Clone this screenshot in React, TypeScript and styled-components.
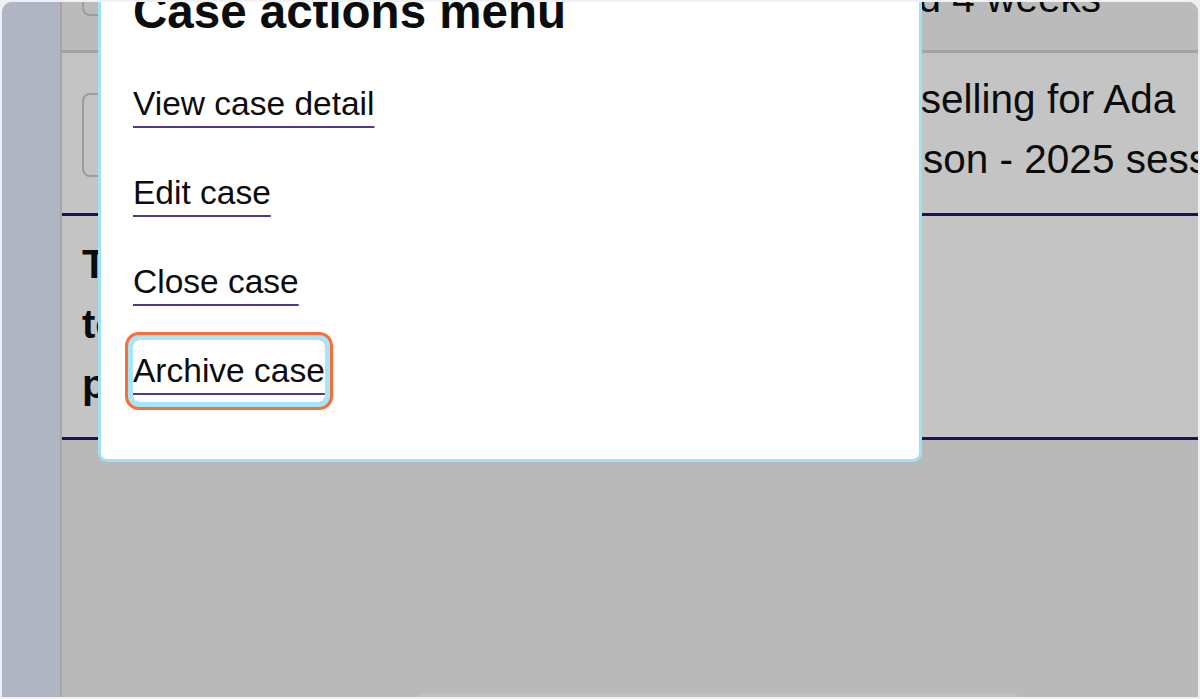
import React from 'react';
import styled, { createGlobalStyle } from 'styled-components';

const GlobalStyle = createGlobalStyle`
  html, body {
    margin: 0;
    padding: 0;
    background: #f1f1f5;
  }
  body {
    font-family: "Liberation Sans", Arial, sans-serif;
    color: #0b0c0c;
  }
  * {
    box-sizing: border-box;
  }
`;

const Frame = styled.div`
  width: 1200px;
  height: 699px;
  padding: 2px;
`;

const Window = styled.div`
  position: relative;
  display: flex;
  height: 100%;
  border-radius: 10px 10px 0 0;
  overflow: hidden;
  background: #b9b9b9;
`;

const Sidebar = styled.aside`
  width: 58px;
  flex: none;
  background: #b0b5c3;
`;

const Main = styled.main`
  flex: 1;
  min-width: 0;
  display: flex;
  flex-direction: column;
  border-left: 2px solid #a6a6a6;
  background: #b9b9b9;
  overflow: hidden;
`;

/* list is scrolled so the previous row only shows its bottom part */
const Table = styled.div`
  margin-top: -110px;
`;

const Row = styled.div<{ $selected?: boolean; $top: number; $bottom: number }>`
  display: grid;
  grid-template-columns: 100px 642px 1fr;
  padding: ${p => p.$top}px 0 ${p => p.$bottom}px 20px;
  background: ${p => (p.$selected ? '#c4c4c4' : '#bbbbbb')};
  border-bottom: 3px solid ${p => (p.$selected ? '#1c1152' : '#a3a3a3')};
`;

const Box = styled.div`
  width: 62px;
  height: 84px;
  margin-top: 24px;
  border: 2px solid #9c9c9c;
  border-radius: 8px;
`;

const Cell = styled.div`
  font-size: 40.5px;
  line-height: 60px;
  white-space: nowrap;
`;

const Detail = styled.div<{ $top: number; $bottom: number }>`
  padding: ${p => p.$top}px 0 ${p => p.$bottom}px 20px;
  background: #c4c4c4;
  border-bottom: 3px solid #1c1152;
  font-size: 40px;
  font-weight: 700;
  line-height: 60px;
  white-space: nowrap;
`;

const Peek = styled.div`
  margin-top: auto;
  margin-left: 343px;
  margin-bottom: -36px;
  width: 625px;
  height: 40px;
  flex: none;
  background: #c1c1c1;
  border-radius: 22px 22px 0 0;
`;

const Modal = styled.div`
  position: absolute;
  top: -42px;
  left: 96px;
  width: 824px;
  padding: 21px 32px 57px;
  background: #ffffff;
  border: 3px solid #9fe1f7;
  border-radius: 0 0 9px 9px;
`;

const Title = styled.h2`
  margin: 0;
  font-size: 47.5px;
  font-weight: 700;
  line-height: 56px;
`;

const Menu = styled.ul`
  margin: 33px 0 0;
  padding: 0;
  list-style: none;
  display: flex;
  flex-direction: column;
  gap: 27px;
`;

const MenuLink = styled.a<{ $focused?: boolean }>`
  display: block;
  width: fit-content;
  padding: 11px 0 11px;
  font-size: 33.5px;
  line-height: 40px;
  color: #0b0c0c;
  text-decoration: underline;
  text-decoration-color: #54378a;
  text-decoration-thickness: 1.5px;
  text-underline-offset: 11px;
  border-radius: 6px;
  box-shadow: ${p => (p.$focused ? '0 0 0 5px #a6e5fa, 0 0 0 8px #fb6d3a' : 'none')};
`;

const actions = ['View case detail', 'Edit case', 'Close case', 'Archive case'];

export default function App() {
  return (
    <>
      <GlobalStyle />
      <Frame>
        <Window>
          <Sidebar />
          <Main>
            <Table>
              <Row $top={16} $bottom={22}>
                <Box />
                <Cell>CAS-1187</Cell>
                <Cell>
                  Last reviewed
                  <br />
                  Added 4 weeks
                </Cell>
              </Row>
              <Row $selected $top={16} $bottom={24}>
                <Box />
                <Cell>CAS-1192</Cell>
                <Cell>
                  Counselling for Ada
                  <br />
                  Jameson - 2025 session
                </Cell>
              </Row>
              <Detail $top={18} $bottom={23}>
                Take action on this case
                <br />
                to keep it open, or it will be
                <br />
                permanently archived.
              </Detail>
            </Table>
            <Peek />
          </Main>
          <Modal role="dialog" aria-label="Case actions menu">
            <Title>Case actions menu</Title>
            <Menu>
              {actions.map(label => (
                <li key={label}>
                  <MenuLink href="#" $focused={label === 'Archive case'}>
                    {label}
                  </MenuLink>
                </li>
              ))}
            </Menu>
          </Modal>
        </Window>
      </Frame>
    </>
  );
}
